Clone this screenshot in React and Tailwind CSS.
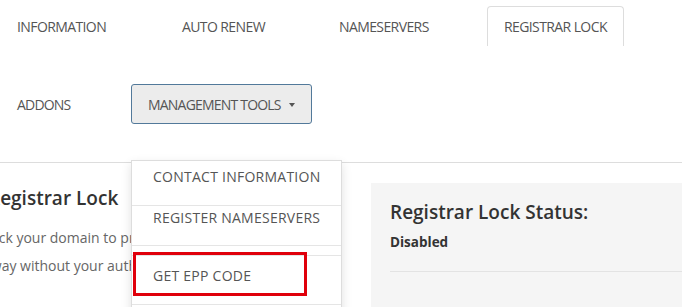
import React from "react";

const tabs = [
  { label: "INFORMATION", w: "w-[165px]" },
  { label: "AUTO RENEW", w: "w-[157px]" },
  { label: "NAMESERVERS", w: "w-[164px]" },
];

const App = () => {
  return (
    <div
      className="relative w-[682px] h-[307px] overflow-hidden bg-white text-[#555]"
      style={{ fontFamily: '"Open Sans", "Liberation Sans", sans-serif' }}
    >
      {/* top tab row */}
      <div className="flex pl-px pt-[6px] h-[45px] text-[14px] tracking-[-0.6px] whitespace-nowrap">
        {tabs.map((t) => (
          <div key={t.label} className={`${t.w} shrink-0 px-4 flex items-center h-[40px]`}>
            {t.label}
          </div>
        ))}
        <div className="shrink-0 px-4 flex items-center h-[40px] border border-b-0 border-[#ddd] rounded-t-[4px] text-[#555]">
          REGISTRAR LOCK
        </div>
      </div>

      {/* second row */}
      <div className="flex items-center pl-px mt-[39px] h-[40px] text-[14px] tracking-[-0.8px] whitespace-nowrap">
        <div className="w-[130px] shrink-0 px-4">ADDONS</div>
        <button className="h-[40px] w-[181px] shrink-0 pl-4 pr-2 flex items-center bg-[#ececec] border border-[#52799a] rounded-[3px] text-[#555] whitespace-nowrap">
          MANAGEMENT TOOLS
          <span className="ml-[8px] mt-[2px] inline-block w-0 h-0 border-l-[3px] border-r-[3px] border-t-[4px] border-l-transparent border-r-transparent border-t-[#555]" />
        </button>
      </div>

      <div className="mt-[38px] border-t border-[#ddd]" />

      {/* content */}
      <div className="flex">
        <div className="w-[371px] shrink-0 overflow-hidden pt-[20px]">
          <h2 className="-ml-[12px] text-[19px] font-semibold text-[#333] leading-[30px] whitespace-nowrap">
            Registrar Lock
          </h2>
          <p className="-ml-[17px] mt-[11px] text-[14px] leading-[28px] text-[#666] whitespace-nowrap">
            Lock your domain to prevent it
            <br />
            away without your authorization.
          </p>
        </div>
        <div className="mt-[20px] flex-1 h-[130px] bg-[#f5f5f5] pl-[19px] pt-[15px]">
          <h3 className="text-[19px] font-semibold text-[#333] leading-[28px] whitespace-nowrap">
            Registrar Lock Status:
          </h3>
          <div className="mt-[6px] text-[13.5px] font-bold text-[#333] leading-[20px]">Disabled</div>
          <div className="mt-[19px] border-t border-[#e3e3e3]" />
        </div>
      </div>

      {/* dropdown menu */}
      <div className="absolute left-[131px] top-[160px] w-[211px] h-[160px] bg-white border border-[#ddd] shadow-[0_4px_10px_rgba(0,0,0,0.12)] text-[14px] tracking-[0.25px] text-[#555]">
        <div className="h-[45px] px-[21px] pt-[5px] border-b border-[#e5e5e5] whitespace-nowrap">
          CONTACT INFORMATION
        </div>
        <div className="h-[40px] px-[21px] pt-[1px] border-b border-[#e5e5e5] whitespace-nowrap">
          REGISTER NAMESERVERS
        </div>
        <div className="h-[10px] border-b border-[#e5e5e5]" />
        <div className="h-[49px] px-[21px] pt-[9px] border-b border-[#e5e5e5]">
          GET EPP CODE
        </div>
      </div>

      {/* highlight */}
      <div className="absolute left-[133px] top-[252px] w-[174px] h-[44px] border-[3px] border-[#e0000b]" />
    </div>
  );
};

export default App;
